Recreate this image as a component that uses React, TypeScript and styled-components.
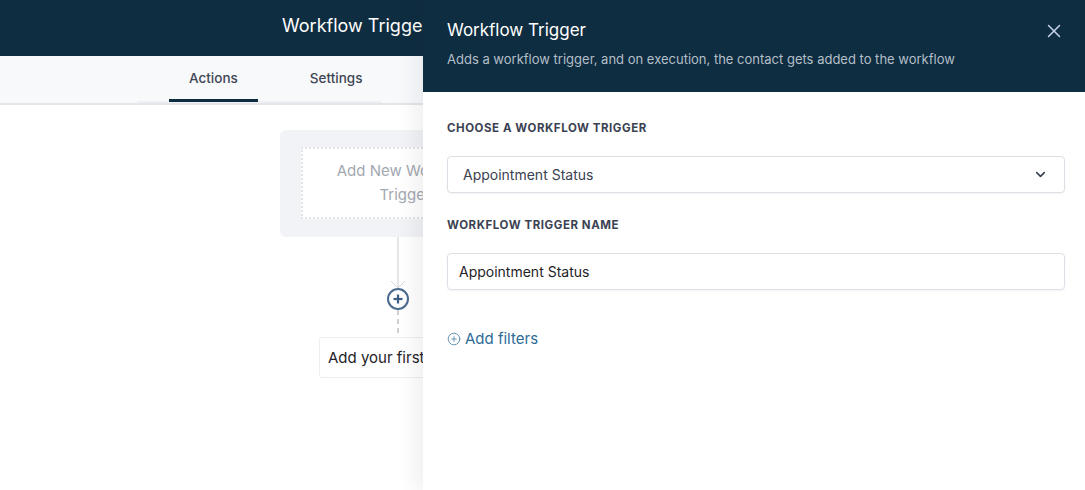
import React from "react";
import styled, { createGlobalStyle } from "styled-components";
import { X, ChevronDown, CirclePlus } from "lucide-react";

const GlobalStyle = createGlobalStyle`
  html, body { margin: 0; padding: 0; }
  body { font-family: Inter, "Noto Sans", "Liberation Sans", sans-serif; background: #fff; }
  * { box-sizing: border-box; }
`;

const NAVY = "#0f2d40";

const Screen = styled.div`
  position: relative;
  width: 1085px;
  height: 490px;
  overflow: hidden;
  background: #fff;
`;

const Page = styled.div`
  display: flex;
  flex-direction: column;
  height: 100%;
`;

const TopBar = styled.header`
  height: 56px;
  background: ${NAVY};
  display: flex;
  align-items: center;
  padding-left: 282px;
  padding-bottom: 6px;
`;

const TopTitle = styled.h1`
  margin: 0;
  color: #fff;
  font-size: 18px;
  font-weight: 400;
  white-space: nowrap;
`;

const TabBar = styled.nav`
  height: 49px;
  background: #f8f9fb;
  border-bottom: 2px solid #e3e5ea;
  display: flex;
  padding-left: 137px;
`;

const TabGroup = styled.div`
  display: flex;
  gap: 32px;
  padding-left: 32px;
  height: 100%;
  margin-bottom: -2px;
  border-bottom: 2px solid #eef0f3;
`;

const Tab = styled.div<{ $active?: boolean }>`
  display: flex;
  align-items: center;
  padding: 0 20px;
  font-size: 13.5px;
  font-weight: 500;
  color: #3f4654;
  border-bottom: 3px solid ${(p) => (p.$active ? NAVY : "transparent")};
  margin-bottom: -1px;
`;

const Canvas = styled.main`
  flex: 1;
  display: flex;
  flex-direction: column;
  align-items: flex-start;
  padding: 25px 0 0 280px;
`;

const Flow = styled.div`
  display: flex;
  flex-direction: column;
  align-items: center;
  width: 236px;
`;

const TriggerCard = styled.div`
  width: 236px;
  height: 107px;
  background: #f2f3f6;
  border-radius: 6px;
  padding: 17px 21px 18px 21px;
`;

const TriggerInner = styled.div`
  height: 100%;
  background: #fff;
  border: 2px dotted #e1e3e8;
  display: flex;
  align-items: center;
  justify-content: center;
  text-align: center;
  font-size: 15px;
  line-height: 24px;
  color: #a3a8b1;
  padding: 0 18px 0 32px;
`;

const Connector = styled.svg`
  display: block;
`;

const ActionBox = styled.div`
  width: 158px;
  height: 41px;
  border: 1px solid #eceef1;
  border-radius: 3px;
  background: #fff;
  display: flex;
  align-items: center;
  padding-left: 8px;
  font-size: 15px;
  color: #1f2328;
  white-space: nowrap;
`;

const Drawer = styled.aside`
  position: absolute;
  top: 0;
  right: 0;
  width: 662px;
  height: 100%;
  background: #fff;
  box-shadow: -6px 0 22px rgba(20, 30, 50, 0.08);
  display: flex;
  flex-direction: column;
`;

const DrawerHead = styled.div`
  height: 92px;
  background: ${NAVY};
  padding: 19px 20px 0 24px;
  display: flex;
  align-items: flex-start;
  justify-content: space-between;
`;

const HeadText = styled.div`
  display: flex;
  flex-direction: column;
  gap: 9px;
`;

const DrawerTitle = styled.h2`
  margin: 0;
  font-size: 17px;
  line-height: 22px;
  font-weight: 400;
  color: #fff;
`;

const DrawerSub = styled.p`
  margin: 0;
  font-size: 13px;
  line-height: 18px;
  color: #b3bfc8;
`;

const CloseBtn = styled.button`
  border: 0;
  background: none;
  padding: 0;
  margin-top: 1px;
  color: #c9d3ea;
  display: flex;
  cursor: pointer;
`;

const DrawerBody = styled.div`
  padding: 28px 20px 0 24px;
  display: flex;
  flex-direction: column;
`;

const Label = styled.label`
  font-size: 11.5px;
  font-weight: 700;
  letter-spacing: 0.55px;
  color: #3b4252;
  line-height: 16px;
  text-transform: uppercase;
  margin-bottom: 20px;
`;

const Field = styled.div<{ $select?: boolean }>`
  height: 37px;
  border: 1px solid #dcdfe5;
  border-radius: 4px;
  display: flex;
  align-items: center;
  justify-content: space-between;
  padding: 0 16px 0 ${(p) => (p.$select ? 15 : 11)}px;
  font-size: 14px;
  color: ${(p) => (p.$select ? "#3b4252" : "#1f2328")};
  box-shadow: 0 1px 2px rgba(0, 0, 0, 0.05);
  margin-bottom: 24px;
`;

const AddFilters = styled.a`
  display: flex;
  align-items: center;
  gap: 4px;
  margin-top: 15px;
  font-size: 15px;
  color: #2d6b97;
  text-decoration: none;
  cursor: pointer;
  svg { color: #5f8fb2; }
`;

export default function App() {
  return (
    <Screen>
      <GlobalStyle />
      <Page>
        <TopBar>
          <TopTitle>Workflow Trigger</TopTitle>
        </TopBar>
        <TabBar>
          <TabGroup>
            <Tab $active>Actions</Tab>
            <Tab>Settings</Tab>
          </TabGroup>
        </TabBar>
        <Canvas>
          <Flow>
            <TriggerCard>
              <TriggerInner>Add New Workflow Trigger</TriggerInner>
            </TriggerCard>
            <Connector width="30" height="100" viewBox="0 0 30 100">
              <line x1="15" y1="0" x2="15" y2="51" stroke="#c9cdd4" strokeWidth="1" />
              <polyline points="8,44 15,51 22,44" fill="none" stroke="#d3d6dc" strokeWidth="1" />
              <circle cx="15" cy="62" r="10" fill="#fff" stroke="#4b6b8f" strokeWidth="2" />
              <line x1="10.5" y1="62" x2="19.5" y2="62" stroke="#3e5f84" strokeWidth="2.2" />
              <line x1="15" y1="57.5" x2="15" y2="66.5" stroke="#3e5f84" strokeWidth="2.2" />
              <line x1="15" y1="73" x2="15" y2="100" stroke="#b9bec6" strokeWidth="1.4" strokeDasharray="5 4" />
            </Connector>
            <ActionBox>Add your first Action</ActionBox>
          </Flow>
        </Canvas>
      </Page>
      <Drawer>
        <DrawerHead>
          <HeadText>
            <DrawerTitle>Workflow Trigger</DrawerTitle>
            <DrawerSub>Adds a workflow trigger, and on execution, the contact gets added to the workflow</DrawerSub>
          </HeadText>
          <CloseBtn aria-label="Close">
            <X size={22} strokeWidth={1.6} />
          </CloseBtn>
        </DrawerHead>
        <DrawerBody>
          <Label>Choose a workflow trigger</Label>
          <Field $select>
            <span>Appointment Status</span>
            <ChevronDown size={15} strokeWidth={2.6} color="#3b4252" />
          </Field>
          <Label>Workflow trigger name</Label>
          <Field>
            <span>Appointment Status</span>
          </Field>
          <AddFilters>
            <CirclePlus size={14} strokeWidth={1.6} />
            Add filters
          </AddFilters>
        </DrawerBody>
      </Drawer>
    </Screen>
  );
}
